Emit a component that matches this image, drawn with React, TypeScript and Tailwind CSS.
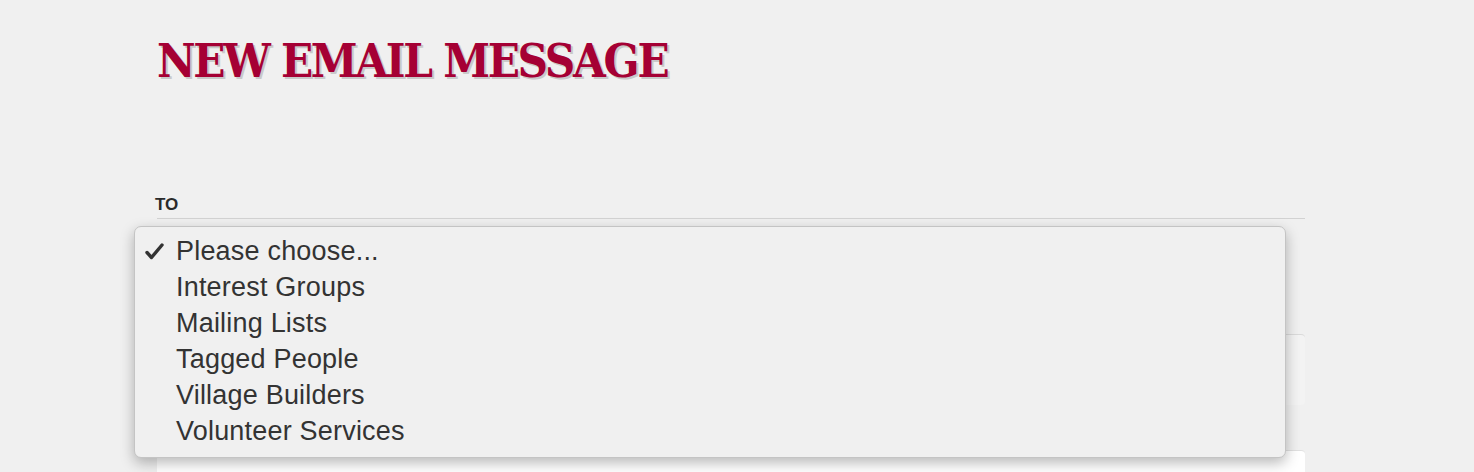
import React from "react";

const items = [
  "Please choose...",
  "Interest Groups",
  "Mailing Lists",
  "Tagged People",
  "Village Builders",
  "Volunteer Services",
];

export default function App() {
  return (
    <div className="relative h-[472px] w-[1474px] overflow-hidden bg-[#f0f0f0]">
      <div className="pl-[157px] pr-[169px] pt-[37px]">
        <h1 className="text-[#a50034] text-[47px] leading-[47px] font-bold font-stretch-condensed tracking-[-2.3px] [font-family:'DejaVu_Serif',serif] [text-shadow:2px_2px_0_#c9c9c9]">
          NEW EMAIL MESSAGE
        </h1>
        <div className="mt-[112px] text-[17px] leading-[17px] font-bold text-[#2a2a2a] [font-family:'Liberation_Sans',Arial,sans-serif] -ml-[2px]">
          TO
        </div>
        <div className="mt-[5px] h-[80px] border-t border-[#d2d2d2] bg-[#f0f0f0]" />
        <div className="mt-[36px] h-[71px] rounded-[4px] border-t border-[#dadada] bg-[#f3f3f3]" />
        <div className="mt-[45px] h-[40px] rounded-[4px] border-t border-[#e0e0e0] bg-white" />
      </div>

      <div className="absolute left-[134px] top-[226px] w-[1152px] h-[232px] rounded-[7px] border border-[#c4c4c4] bg-[#f0f0f0] shadow-[0_5px_14px_rgba(0,0,0,0.28)] pt-[6px] [font-family:'Liberation_Sans',Arial,sans-serif]">
        {items.map((t, i) => (
          <div key={t} className="relative flex h-[36px] items-center pl-[41px] text-[27px] tracking-[0.2px] text-[#333333]">
            {i === 0 && (
              <svg className="absolute left-[10px] top-[10px]" width="19" height="17" viewBox="0 0 19 17">
                <path d="M2 9.5 L6.5 14.5 L17 2" fill="none" stroke="#333333" strokeWidth="3.4" strokeLinecap="round" strokeLinejoin="round" />
              </svg>
            )}
            {t}
          </div>
        ))}
      </div>
    </div>
  );
}
